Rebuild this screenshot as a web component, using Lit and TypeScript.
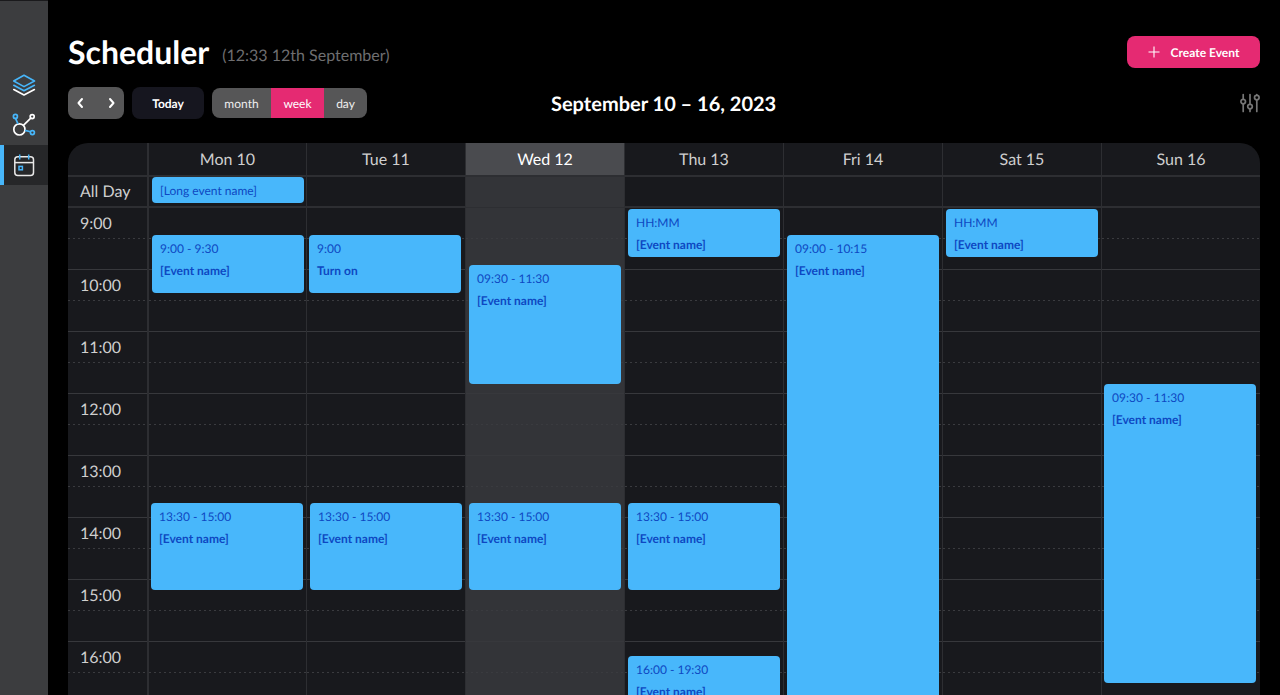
import { LitElement, html, css } from "lit";
import { customElement } from "lit/decorators.js";

const DAYS = ["Mon 10", "Tue 11", "Wed 12", "Thu 13", "Fri 14", "Sat 15", "Sun 16"];
const HOURS = ["9:00", "10:00", "11:00", "12:00", "13:00", "14:00", "15:00", "16:00"];
const COL_X = [147, 306, 465, 624, 783, 942, 1101];
const BODY_TOP = 208;

type Ev = { day: number; top: number; bottom: number; x: number; time: string; name: string };
const EVENTS: Ev[] = [
  { day: 0, top: 235, bottom: 293, x: 152, time: "9:00 - 9:30", name: "[Event name]" },
  { day: 1, top: 235, bottom: 293, x: 309, time: "9:00", name: "Turn on" },
  { day: 2, top: 265, bottom: 384, x: 469, time: "09:30 - 11:30", name: "[Event name]" },
  { day: 3, top: 209, bottom: 257, x: 628, time: "HH:MM", name: "[Event name]" },
  { day: 4, top: 235, bottom: 760, x: 787, time: "09:00 - 10:15", name: "[Event name]" },
  { day: 5, top: 209, bottom: 257, x: 946, time: "HH:MM", name: "[Event name]" },
  { day: 6, top: 384, bottom: 683, x: 1104, time: "09:30 - 11:30", name: "[Event name]" },
  { day: 0, top: 503, bottom: 590, x: 151, time: "13:30 - 15:00", name: "[Event name]" },
  { day: 1, top: 503, bottom: 590, x: 310, time: "13:30 - 15:00", name: "[Event name]" },
  { day: 2, top: 503, bottom: 590, x: 469, time: "13:30 - 15:00", name: "[Event name]" },
  { day: 3, top: 503, bottom: 590, x: 628, time: "13:30 - 15:00", name: "[Event name]" },
  { day: 3, top: 656, bottom: 760, x: 628, time: "16:00 - 19:30", name: "[Event name]" },
];

@customElement("app-root")
export class AppRoot extends LitElement {
  static styles = css`
    :host { display: block; width: 1280px; height: 695px; overflow: hidden; background: #000; font-family: Lato, "Liberation Sans", sans-serif; text-rendering: geometricPrecision; }
    * { box-sizing: border-box; }
    .page { display: flex; height: 695px; }
    .side { width: 48px; flex: none; background: #3c3d3f; border-top: 1px solid #1a1a1c; padding-top: 64px; display: flex; flex-direction: column; }
    .side-item { height: 40px; display: flex; align-items: center; justify-content: center; }
    .side-item.on { background: #262729; box-shadow: inset 4px 0 0 #47b6fa; }
    .main { flex: 1; min-width: 0; padding: 36px 20px 0; overflow: hidden; }
    .top { display: flex; align-items: center; justify-content: space-between; height: 32px; }
    .title { display: flex; align-items: center; gap: 13px; }
    h1 { margin: 0; font-size: 32px; line-height: 32px; font-weight: 700; color: #fff; }
    .now { font-size: 16px; line-height: 20px; margin-top: 7px; color: #6e6e70; }
    .create { width: 133px; height: 32px; border: 0; border-radius: 8px; background: #e52a72; color: #fff; font: 700 12px Lato, sans-serif; text-rendering: geometricPrecision; display: flex; align-items: center; justify-content: center; gap: 11px; padding: 0; }
    .bar { position: relative; display: flex; align-items: center; height: 32px; margin-top: 19px; }
    .nav { width: 56px; height: 32px; border-radius: 8px; background: #565657; display: flex; align-items: center; justify-content: space-between; padding: 0 4px; }
    .today { margin-left: 8px; width: 72px; height: 32px; border-radius: 8px; background: #16161f; color: #fff; font-size: 12px; font-weight: 700; display: flex; align-items: center; justify-content: center; }
    .seg { margin-left: 8px; height: 30px; border-radius: 8px; overflow: hidden; display: flex; background: #565657; color: #eeeeee; font-size: 12px; }
    .seg span { display: flex; align-items: center; justify-content: center; }
    .seg .m { width: 59px; }
    .seg .w { width: 53px; background: #e52a72; color: #fff; }
    .seg .d { width: 43px; }
    .range { position: absolute; left: 483px; top: 1px; font-size: 20px; line-height: 32px; font-weight: 700; color: #fff; }
    .tune { margin-left: auto; display: flex; }
    .cal { margin-top: 24px; background: #18191d; border-radius: 20px 20px 0 0; overflow: hidden; color: #cfcfcf; }
    .row { display: grid; grid-template-columns: 79px repeat(6, 159px) 1fr; }
    .head { height: 34px; border-bottom: 2px solid #2d2e32; }
    .head > div { display: flex; align-items: center; justify-content: center; font-size: 16px; border-left: 1px solid #2d2e32; }
    .head > div:first-child, .allday > div:first-child { border-left: 0; }
    .head > div:nth-child(2), .allday > div:nth-child(2), .col.first { border-left-width: 2px; }
    .head .tc { background: #4a4b4f; color: #fff; }
    .allday { height: 31px; border-bottom: 2px solid #2d2e32; }
    .allday > div { border-left: 1px solid #2d2e32; padding: 0 3px; }
    .allday > div:first-child { padding: 0 0 0 12px; font-size: 16px; line-height: 30px; }
    .allday .tc { background: #333438; }
    .allev { height: 26px; border-radius: 4px; background: #48b7fb; color: #0e48c2; font-size: 12px; line-height: 28px; padding-left: 8px; width: 152px; }
    .body { height: 600px; }
    .col { position: relative; border-left: 1px solid #2d2e32; }
    .col.tc { background: #333438; }
    .timecol { font-size: 16px; }
    .hour { height: 62px; border-bottom: 1px solid #37383c; background-image: repeating-linear-gradient(to right, #3a3b3f 0 2px, transparent 2px 5px); background-size: 100% 1px; background-position: 0 30px; background-repeat: no-repeat; }
    .timecol .hour { padding: 7px 0 0 12px; line-height: 18px; }
    .ev { position: absolute; width: 152px; border-radius: 4px; background: #48b7fb; color: #0e48c2; font-size: 12px; padding: 6px 8px; }
    .ev .t { line-height: 15px; }
    .ev .n { margin-top: 7px; line-height: 15px; font-weight: 700; }
  `;

  private sideIcons() {
    const blue = "#47b6fa";
    return html`
      <div class="side-item">
        <svg width="24" height="24" viewBox="0 0 24 24" fill="none" stroke-width="1.6" stroke-linejoin="round" stroke-linecap="round">
          <path d="M12 2.2 22.5 8 12 13.6 1.7 8Z" stroke=${blue} />
          <path d="M1.8 12.3 12 17.8 22.4 12.3" stroke=${blue} />
          <path d="M1.8 16.5 12 22 22.4 16.5" stroke="#fff" />
        </svg>
      </div>
      <div class="side-item">
        <svg width="24" height="24" viewBox="0 0 24 24" fill="none" stroke-width="1.7">
          <circle cx="7.4" cy="16.4" r="5.6" stroke="#fff" />
          <path d="M11.4 12.4 19 4.8" stroke="#fff" />
          <path d="M3.6 5.6 6 10.8M13 17.4 18.6 18.8" stroke=${blue} />
          <circle cx="20.2" cy="3.6" r="2" stroke="#fff" />
          <circle cx="3.4" cy="3.4" r="2" stroke=${blue} />
          <circle cx="20.4" cy="19.6" r="2" stroke=${blue} />
        </svg>
      </div>
      <div class="side-item on">
        <svg width="24" height="24" viewBox="0 0 24 24" fill="none" stroke-width="1.5">
          <rect x="2.8" y="3.8" width="18.7" height="18.7" rx="3" stroke="#e8e8e8" />
          <path d="M2.8 9.6H21.5" stroke="#e8e8e8" />
          <path d="M7.7 1.4V6.4M16.7 1.4V6.4" stroke=${blue} />
          <rect x="7" y="13.4" width="3.4" height="3.4" stroke=${blue} />
        </svg>
      </div>`;
  }

  private chevron(d: string) {
    return html`<svg width="16" height="16" viewBox="0 0 16 16" fill="none"><path d=${d} stroke="#fff" stroke-width="2" stroke-linecap="round" stroke-linejoin="round" /></svg>`;
  }

  render() {
    return html`
      <div class="page">
        <nav class="side">${this.sideIcons()}</nav>
        <main class="main">
          <div class="top">
            <div class="title"><h1>Scheduler</h1><span class="now">(12:33 12th September)</span></div>
            <button class="create">
              <svg width="12" height="12" viewBox="0 0 12 12"><path d="M6 .5V11.5M.5 6H11.5" stroke="#fff" stroke-width="1.1" /></svg>
              Create Event
            </button>
          </div>
          <div class="bar">
            <div class="nav">${this.chevron("M10 4 6.5 8 10 12")}${this.chevron("M6 4 9.5 8 6 12")}</div>
            <div class="today">Today</div>
            <div class="seg"><span class="m">month</span><span class="w">week</span><span class="d">day</span></div>
            <div class="range">September 10 – 16, 2023</div>
            <div class="tune">
              <svg width="20" height="20" viewBox="0 0 20 20" fill="none" stroke="#767676" stroke-width="1.7" stroke-linecap="round">
                <path d="M3.2 1.5V6.2M3.2 11V18.5M10 1.5V11M10 16V18.5M16.8 1.5V2.2M16.8 7V18.5" />
                <circle cx="3.2" cy="8.6" r="2.3" /><circle cx="10" cy="13.6" r="2.3" /><circle cx="16.8" cy="4.6" r="2.3" />
              </svg>
            </div>
          </div>
          <section class="cal">
            <div class="row head">
              <div></div>
              ${DAYS.map((d, i) => html`<div class=${i === 2 ? "tc" : ""}>${d}</div>`)}
            </div>
            <div class="row allday">
              <div>All Day</div>
              ${DAYS.map((_, i) => html`<div class=${i === 2 ? "tc" : ""}>${i === 0 ? html`<div class="allev">[Long event name]</div>` : ""}</div>`)}
            </div>
            <div class="row body">
              <div class="timecol">${HOURS.map((h) => html`<div class="hour">${h}</div>`)}<div class="hour"></div></div>
              ${DAYS.map((_, i) => html`
                <div class="col ${i === 2 ? "tc" : ""} ${i === 0 ? "first" : ""}">
                  ${HOURS.map(() => html`<div class="hour"></div>`)}<div class="hour"></div>
                  ${EVENTS.filter((e) => e.day === i).map((e) => html`
                    <div class="ev" style="top:${e.top - BODY_TOP}px;height:${e.bottom - e.top}px;left:${e.x - COL_X[i] - (i === 0 ? 2 : 1)}px">
                      <div class="t">${e.time}</div><div class="n">${e.name}</div>
                    </div>`)}
                </div>`)}
            </div>
          </section>
        </main>
      </div>`;
  }
}
